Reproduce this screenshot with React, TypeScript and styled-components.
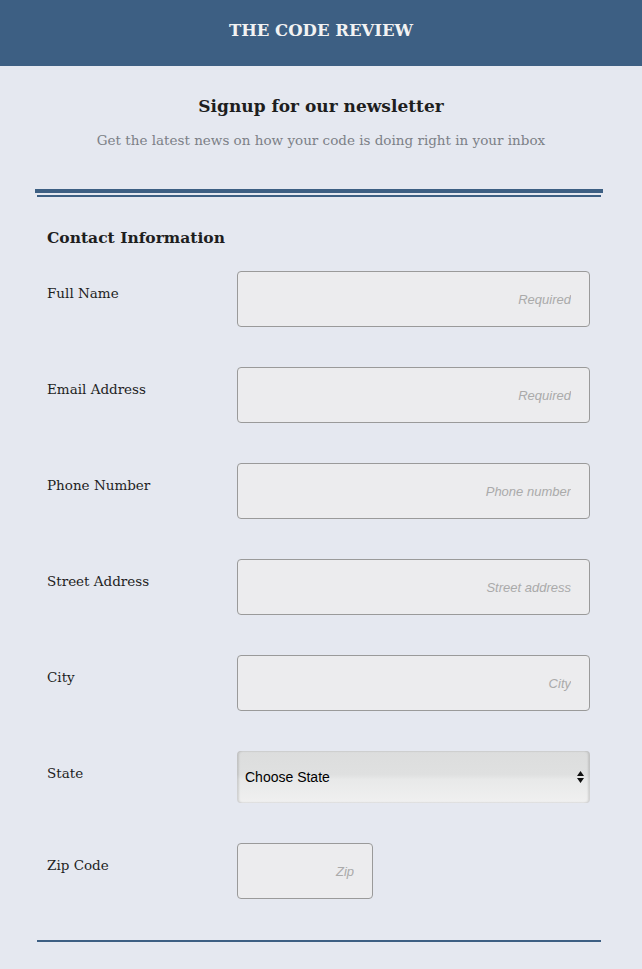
import React from "react";
import styled, { createGlobalStyle } from "styled-components";

const Global = createGlobalStyle`
  html, body { margin: 0; padding: 0; background: #e5e8f0; }
  body { font-family: "DejaVu Serif", "Liberation Serif", serif; color: #222; }
`;

const Page = styled.div`
  width: 642px;
  min-height: 969px;
  background: #e5e8f0;
`;

const Header = styled.header`
  box-sizing: border-box;
  height: 66px;
  padding-bottom: 6px;
  background: #3d5f83;
  display: flex;
  align-items: center;
  justify-content: center;
`;

const Brand = styled.div`
  color: #f2f2f2;
  font-weight: bold;
  font-size: 16.5px;
`;

const Intro = styled.section`
  display: flex;
  flex-direction: column;
  align-items: center;
  padding-top: 28px;
`;

const Title = styled.h1`
  margin: 0;
  font-size: 17px;
  line-height: 24px;
  font-weight: bold;
  color: #1e1e1e;
`;

const Subtitle = styled.p`
  margin: 13px 0 0;
  font-size: 13.5px;
  line-height: 18px;
  color: #7c8087;
`;

const DoubleRule = styled.div`
  margin: 40px 39px 0 35px;
  display: flex;
  flex-direction: column;
  gap: 2px;
`;

const Rule = styled.div<{ $thick?: number; $inset?: number }>`
  height: ${(p) => p.$thick ?? 2}px;
  margin: 0 ${(p) => p.$inset ?? 0}px;
  background: #3d5f83;
`;

const Form = styled.form`
  padding: 0 52px 0 47px;
`;

const SectionTitle = styled.h2`
  margin: 29px 0 0;
  font-size: 15.5px;
  line-height: 24px;
  font-weight: bold;
  color: #1e1e1e;
`;

const Fields = styled.div`
  margin-top: 21px;
  display: flex;
  flex-direction: column;
  gap: 40px;
`;

const Row = styled.div`
  display: grid;
  grid-template-columns: 190px 1fr;
  align-items: start;
`;

const Label = styled.label`
  padding-top: 13px;
  font-size: 13.5px;
  line-height: 18px;
  color: #1e1e1e;
`;

const Input = styled.input<{ $width?: number }>`
  box-sizing: border-box;
  width: ${(p) => (p.$width ? `${p.$width}px` : "100%")};
  height: 56px;
  border: 1px solid #9a9a9a;
  border-radius: 4px;
  background: #ececee;
  padding: 0 18px 0 10px;
  text-align: right;
  font-family: "Liberation Sans", Arial, sans-serif;
  font-size: 13px;
  color: #222;
  outline: none;
  &::placeholder {
    color: #aaaaaa;
    font-style: italic;
  }
`;

const SelectWrap = styled.div`
  position: relative;
  height: 52px;
`;

const Select = styled.select`
  box-sizing: border-box;
  width: 100%;
  height: 52px;
  appearance: none;
  -webkit-appearance: none;
  border: none;
  border-radius: 4px;
  padding: 0 24px 0 8px;
  font-family: "Liberation Sans", Arial, sans-serif;
  font-size: 14px;
  color: #000;
  background: linear-gradient(
    to bottom,
    #dcdddd 0%,
    #dfe0e0 45%,
    #e8e9e9 55%,
    #f0f0f0 100%
  );
  box-shadow: inset 2px 0 2px rgba(0, 0, 0, 0.12),
    inset -2px 0 2px rgba(0, 0, 0, 0.12);
  outline: none;
`;

const Arrows = styled.svg`
  position: absolute;
  right: 6px;
  top: 20px;
  pointer-events: none;
`;

const BottomRule = styled.div`
  margin: 41px 41px 0 37px;
  height: 2px;
  background: #3d5f83;
`;

const fields = [
  { label: "Full Name", placeholder: "Required" },
  { label: "Email Address", placeholder: "Required" },
  { label: "Phone Number", placeholder: "Phone number" },
  { label: "Street Address", placeholder: "Street address" },
  { label: "City", placeholder: "City" },
];

export default function App() {
  return (
    <Page>
      <Global />
      <Header>
        <Brand>THE CODE REVIEW</Brand>
      </Header>
      <Intro>
        <Title>Signup for our newsletter</Title>
        <Subtitle>Get the latest news on how your code is doing right in your inbox</Subtitle>
      </Intro>
      <DoubleRule>
        <Rule $thick={4} />
        <Rule $thick={2} $inset={2} />
      </DoubleRule>
      <Form onSubmit={(e) => e.preventDefault()}>
        <SectionTitle>Contact Information</SectionTitle>
        <Fields>
          {fields.map((f) => (
            <Row key={f.label}>
              <Label>{f.label}</Label>
              <Input placeholder={f.placeholder} />
            </Row>
          ))}
          <Row>
            <Label>State</Label>
            <SelectWrap>
              <Select defaultValue="">
                <option value="">Choose State</option>
              </Select>
              <Arrows width="7" height="12" viewBox="0 0 7 12">
                <path d="M3.5 0 L7 5 H0 Z M0 7 H7 L3.5 12 Z" fill="#111" />
              </Arrows>
            </SelectWrap>
          </Row>
          <Row>
            <Label>Zip Code</Label>
            <Input placeholder="Zip" $width={136} />
          </Row>
        </Fields>
      </Form>
      <BottomRule />
    </Page>
  );
}
